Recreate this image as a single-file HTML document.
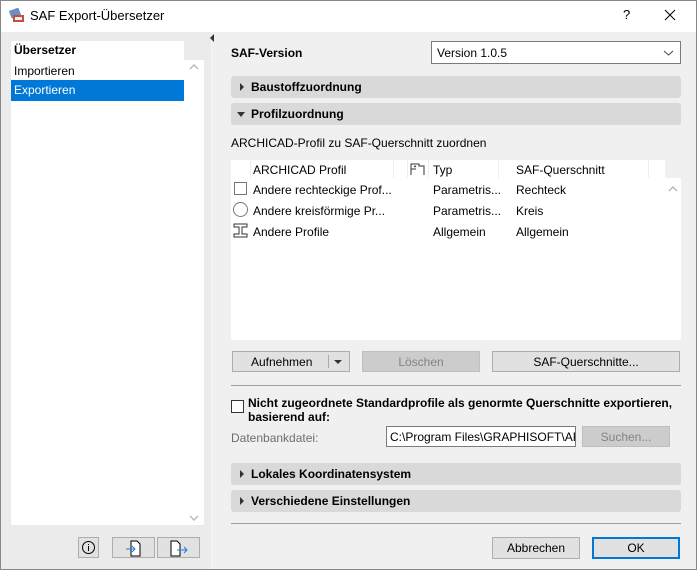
<!DOCTYPE html>
<html><head><meta charset="utf-8"><style>
*{box-sizing:border-box;margin:0;padding:0}
body{width:697px;height:570px;overflow:hidden;font-family:"Liberation Sans",sans-serif;font-size:12px;color:#000;background:#f0f0f0;position:relative}
.a{position:absolute}
.btn{position:absolute;border:1px solid #adadad;background:#e1e1e1;text-align:center;line-height:20px;font-size:12px}
.bar{position:absolute;left:231px;width:450px;height:22px;background:#d9d9d9;border-radius:3px;font-weight:bold;line-height:22px;padding-left:20px}
.bar:before{content:"";position:absolute;left:9px;top:7px;border-left:4px solid #333;border-top:4px solid transparent;border-bottom:4px solid transparent}
.bar.open:before{left:6px;top:9px;border-top:5px solid #333;border-left:4px solid transparent;border-right:4px solid transparent;border-bottom:0}
</style></head><body>
<div class="a" style="left:0;top:0;width:697px;height:570px;border:1px solid #888"></div>
<div class="a" style="left:1px;top:1px;width:695px;height:31px;background:#fff"></div>
<svg class="a" style="left:8px;top:8px" width="18" height="16"><rect x="2" y="1" width="10" height="8" fill="#6b8fc4" transform="rotate(-20 7 5)"/><rect x="5" y="7" width="11" height="7" fill="#c0503c"/><rect x="7" y="9" width="7" height="3" fill="#eee"/></svg>
<div class="a" style="left:30px;top:8px;font-size:13px">SAF Export-Übersetzer</div>
<div class="a" style="left:623px;top:7px;font-size:13px">?</div>
<svg class="a" style="left:664px;top:9px" width="12" height="12"><path d="M1 1L11 11M11 1L1 11" stroke="#000" stroke-width="1"/></svg>
<div class="a" style="left:1px;top:32px;width:210px;height:537px;background:#ebebeb"></div>
<div class="a" style="left:211px;top:32px;width:5px;height:537px;background:#f0f0f0;border-left:1px solid #f7f7f7"></div>
<div class="a" style="left:11px;top:41px;width:173px;height:484px;background:#fff"></div>
<div class="a" style="left:184px;top:60px;width:20px;height:465px;background:#fff"></div>
<div class="a" style="left:14px;top:43px;font-weight:bold">Übersetzer</div>
<div class="a" style="left:14px;top:64px">Importieren</div>
<div class="a" style="left:11px;top:80px;width:173px;height:21px;background:#0078d7;color:#fff;padding:3px 0 0 3px">Exportieren</div>
<svg class="a" style="left:189px;top:64px" width="10" height="6"><path d="M1 5L5 1L9 5" stroke="#bbb" fill="none" stroke-width="1.5"/></svg>
<svg class="a" style="left:189px;top:515px" width="10" height="6"><path d="M1 1L5 5L9 1" stroke="#bbb" fill="none" stroke-width="1.5"/></svg>
<div class="a" style="left:210px;top:34px;border-right:4px solid #333;border-top:4px solid transparent;border-bottom:4px solid transparent"></div>
<div class="btn" style="left:78px;top:537px;width:21px;height:21px;line-height:18px"><svg width="15" height="15" style="margin-top:2px"><circle cx="7.5" cy="7.5" r="6" fill="none" stroke="#000"/><path d="M7.5 6v5M7.5 4v1" stroke="#000"/></svg></div>
<div class="btn" style="left:112px;top:537px;width:43px;height:21px"><svg width="20" height="18" style="margin-top:1px"><path d="M7 2h6l3 3v12H7z" fill="#fff" stroke="#000"/><path d="M2 10h9M8 7l3 3-3 3" stroke="#1e7be0" fill="none"/></svg></div>
<div class="btn" style="left:157px;top:537px;width:43px;height:21px"><svg width="22" height="18" style="margin-top:1px"><path d="M3 2h6l3 3v12H3z" fill="#fff" stroke="#000"/><path d="M9 11h10M16 8l3 3-3 3" stroke="#1e7be0" fill="none"/></svg></div>

<div class="a" style="left:231px;top:46px;font-weight:bold">SAF-Version</div>
<div class="a" style="left:431px;top:41px;width:250px;height:23px;background:#fff;border:1px solid #7a7a7a;padding:4px 0 0 5px">Version 1.0.5<svg style="position:absolute;right:6px;top:8px" width="11" height="6"><path d="M1 1L5.5 5L10 1" stroke="#444" fill="none"/></svg></div>
<div class="bar" style="top:76px">Baustoffzuordnung</div>
<div class="bar open" style="top:103px">Profilzuordnung</div>
<div class="a" style="left:231px;top:136px">ARCHICAD-Profil zu SAF-Querschnitt zuordnen</div>
<div class="a" style="left:231px;top:160px;width:434px;height:180px;background:#fff"></div>
<div class="a" style="left:665px;top:178px;width:16px;height:162px;background:#fff"></div>
<svg class="a" style="left:668px;top:186px" width="10" height="6"><path d="M1 5L5 1L9 5" stroke="#bbb" fill="none" stroke-width="1.5"/></svg>
<div class="a" style="left:231px;top:160px;width:434px;height:18px;background:#fff">
<div class="a" style="left:19px;top:0;width:1px;height:18px;background:#eee"></div>
<div class="a" style="left:22px;top:3px">ARCHICAD Profil</div>
<div class="a" style="left:162px;top:0;width:1px;height:18px;background:#eee"></div>
<div class="a" style="left:176px;top:0;width:1px;height:18px;background:#eee"></div>
<svg class="a" style="left:179px;top:2px" width="16" height="14"><path d="M1 13V2h8v2h5v9M1 7h5M4 5l1 -1 1 1" fill="none" stroke="#333"/></svg>
<div class="a" style="left:197px;top:0;width:1px;height:18px;background:#eee"></div>
<div class="a" style="left:202px;top:3px">Typ</div>
<div class="a" style="left:267px;top:0;width:1px;height:18px;background:#eee"></div>
<div class="a" style="left:285px;top:3px">SAF-Querschnitt</div>
<div class="a" style="left:417px;top:0;width:1px;height:18px;background:#eee"></div>
</div>
<div class="a" style="left:234px;top:182px;width:13px;height:13px;border:1px solid #777"></div>
<div class="a" style="left:233px;top:202px;width:15px;height:15px;border:1px solid #777;border-radius:50%"></div>
<svg class="a" style="left:233px;top:223px" width="15" height="15"><path d="M1 1h13v3H9v7h5v3H1v-3h5V4H1z" fill="none" stroke="#333"/></svg>
<div class="a" style="left:253px;top:183px">Andere rechteckige Prof...</div>
<div class="a" style="left:433px;top:183px">Parametris...</div>
<div class="a" style="left:516px;top:183px">Rechteck</div>
<div class="a" style="left:253px;top:204px">Andere kreisförmige Pr...</div>
<div class="a" style="left:433px;top:204px">Parametris...</div>
<div class="a" style="left:516px;top:204px">Kreis</div>
<div class="a" style="left:253px;top:225px">Andere Profile</div>
<div class="a" style="left:433px;top:225px">Allgemein</div>
<div class="a" style="left:516px;top:225px">Allgemein</div>

<div class="btn" style="left:232px;top:351px;width:118px;height:21px;text-align:left;padding-left:18px">Aufnehmen<span style="position:absolute;left:95px;top:3px;width:1px;height:13px;background:#aaa"></span><span style="position:absolute;left:101px;top:8px;border-top:4px solid #333;border-left:4px solid transparent;border-right:4px solid transparent"></span></div>
<div class="btn" style="left:362px;top:351px;width:118px;height:21px;background:#cccccc;border-color:#bfbfbf;color:#838383">Löschen</div>
<div class="btn" style="left:492px;top:351px;width:188px;height:21px">SAF-Querschnitte...</div>
<div class="a" style="left:231px;top:385px;width:450px;height:1px;background:#a0a0a0"></div>
<div class="a" style="left:231px;top:400px;width:13px;height:13px;border:1px solid #333;background:#fff"></div>
<div class="a" style="left:248px;top:396px;font-weight:bold;line-height:14px">Nicht zugeordnete Standardprofile als genormte Querschnitte exportieren,<br>basierend auf:</div>
<div class="a" style="left:231px;top:431px;color:#6d6d6d">Datenbankdatei:</div>
<div class="a" style="left:386px;top:426px;width:190px;height:21px;background:#fff;border:1px solid #7a7a7a;padding:3px 0 0 3px;overflow:hidden;white-space:nowrap">C:\Program Files\GRAPHISOFT\ARCHICAD</div>
<div class="btn" style="left:582px;top:426px;width:88px;height:21px;background:#cccccc;border-color:#bfbfbf;color:#838383">Suchen...</div>
<div class="bar" style="top:463px">Lokales Koordinatensystem</div>
<div class="bar" style="top:490px">Verschiedene Einstellungen</div>
<div class="a" style="left:231px;top:523px;width:450px;height:1px;background:#a0a0a0"></div>
<div class="btn" style="left:492px;top:537px;width:88px;height:22px">Abbrechen</div>
<div class="btn" style="left:592px;top:537px;width:88px;height:22px;border:2px solid #0078d7;line-height:18px">OK</div>
</body></html>
